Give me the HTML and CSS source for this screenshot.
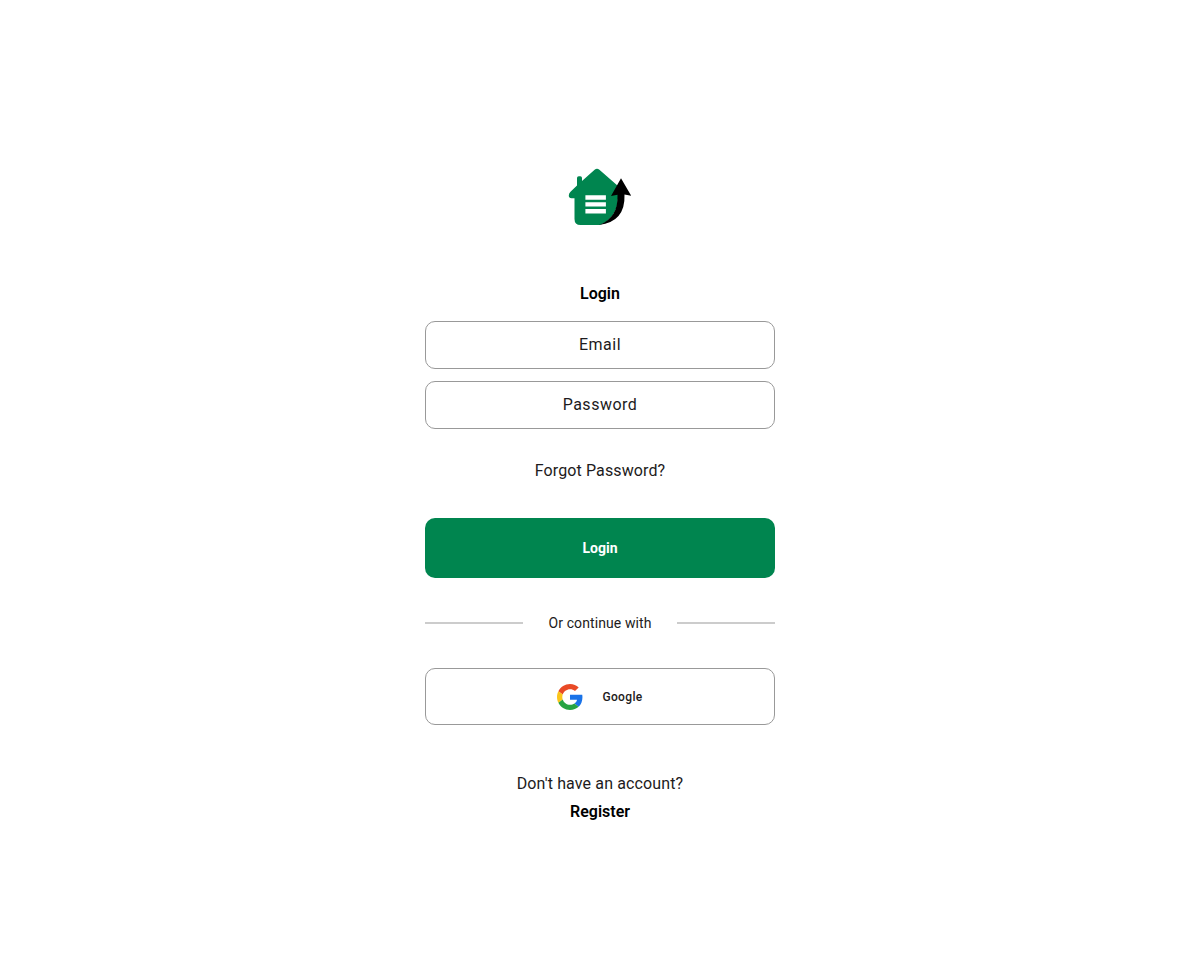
FILE: index.html
```html
<!DOCTYPE html>
<html lang="en">

<head>
  <meta charset="UTF-8">
  <meta name="viewport" content="width=device-width, initial-scale=1">
  <title>Login</title>
  <link rel="stylesheet" href="styles.css">
</head>

<body>

  <main class="container">
    <svg class="logo" viewBox="0 0 80 72" width="80" height="72" aria-hidden="true">
      <path fill="#00854f" d="M17 25.5V18q0-1.800 1.800-1.800h1.500Q22 16.200 22 18v3L34.600 9.800q2.400-2 4.800 0L58 26v12.500q-1 19-18 26.500H20.500q-6 0-6-6V38.300H11.500Q8.800 38.300 8.800 35.500q0-2.300 1.700-3.800z"/>
      <path fill="#fff" d="M25.400 35.200h20.500v4.600H25.400zM25.400 42.200h20.500v4.400H25.400zM25.400 49h20.500v4.400H25.400z"/>
      <path fill="#000" d="M61 18.200L71.200 35.800l-6.700-1.200Q65.500 62 39 65 58.500 57.500 57.500 34.700l-6.500 1.200z"/>
    </svg>

    <h1>Login</h1>

    <form onsubmit="return false">
      <input type="text" id="email" placeholder="Email">
      <input type="password" id="password" placeholder="Password">
      <a class="forgot" href="#">Forgot Password?</a>
      <button type="submit" class="btn-login">Login</button>
    </form>

    <div class="divider">
      <span>Or continue with</span>
    </div>

    <button type="button" class="btn-google">
      <svg viewBox="0 0 48 48" width="26" height="26" aria-hidden="true">
        <path fill="#e94a26" d="M24 9.500c3.540 0 6.710 1.220 9.210 3.600l6.850-6.850C35.900 2.380 30.470 0 24 0 14.620 0 6.510 5.380 2.560 13.220l7.980 6.190C12.430 13.720 17.740 9.500 24 9.500z"/>
        <path fill="#1a73e8" d="M46.980 24.550c0-1.570-.150-3.090-.380-4.550H24v9.020h12.940c-.580 2.960-2.260 5.480-4.780 7.180l7.730 6c4.510-4.180 7.090-10.360 7.090-17.650z"/>
        <path fill="#fbc51b" d="M10.530 28.590c-.480-1.450-.760-2.990-.760-4.590s.270-3.140.760-4.590l-7.980-6.190C.920 16.460 0 20.120 0 24s.920 7.540 2.560 10.780l7.970-6.190z"/>
        <path fill="#27a343" d="M24 48c6.480 0 11.930-2.130 15.890-5.810l-7.730-6c-2.150 1.450-4.920 2.300-8.160 2.300-6.260 0-11.570-4.220-13.470-9.910l-7.980 6.190C6.510 42.620 14.620 48 24 48z"/>
      </svg>
      <span>Google</span>
    </button>

    <p class="question">Don't have an account?</p>
    <a class="register" href="#">Register</a>
  </main>

</body>

</html>
```
FILE: styles.css
```css
* {
  box-sizing: border-box;
}

body {
  font-family: Roboto, sans-serif;
  background-color: #fff;
  color: #1d1b20;
  margin: 0;
}

.container {
  width: 350px;
  margin: 0 auto;
  padding-top: 160px;
  display: flex;
  flex-direction: column;
  align-items: center;
}

h1 {
  margin: 50px 0 15px;
  font-size: 16px;
  line-height: 24px;
  font-weight: 600;
  color: #000;
}

form {
  width: 100%;
  display: flex;
  flex-direction: column;
  align-items: center;
}

input {
  width: 100%;
  height: 48px;
  margin-bottom: 12px;
  padding: 0 12px 2px;
  border: 1px solid #999;
  border-radius: 10px;
  background-color: #fff;
  font-family: inherit;
  font-size: 16px;
  letter-spacing: 0.5px;
  text-align: center;
}

input::placeholder {
  color: #1d1b20;
}

a {
  text-decoration: none;
}

.forgot {
  margin: 18px 0 35px;
  font-size: 16px;
  line-height: 24px;
  letter-spacing: 0.12px;
  color: #1d1b20;
}

button {
  width: 100%;
  border-radius: 10px;
  font-family: inherit;
  cursor: pointer;
}

.btn-login {
  height: 60px;
  border: none;
  background-color: #00854f;
  color: #fff;
  font-size: 14px;
  font-weight: 700;
}

.divider {
  width: 100%;
  display: flex;
  align-items: center;
  gap: 25px;
  margin: 35px 0;
  font-size: 14px;
  line-height: 20px;
  letter-spacing: 0.1px;
}

.divider::before,
.divider::after {
  content: "";
  flex: 1;
  height: 2px;
  background-color: #ccc;
}

.btn-google {
  height: 57px;
  border: 1px solid #999;
  background-color: #fff;
  color: #1d1b20;
  display: flex;
  align-items: center;
  justify-content: center;
  gap: 19px;
  font-size: 12px;
  font-weight: 500;
  letter-spacing: 0.35px;
}

.question {
  margin: 47px 0 4px;
  font-size: 16px;
  line-height: 24px;
  letter-spacing: 0.13px;
}

.register {
  font-size: 16px;
  line-height: 24px;
  font-weight: 600;
  color: #000;
}
```
